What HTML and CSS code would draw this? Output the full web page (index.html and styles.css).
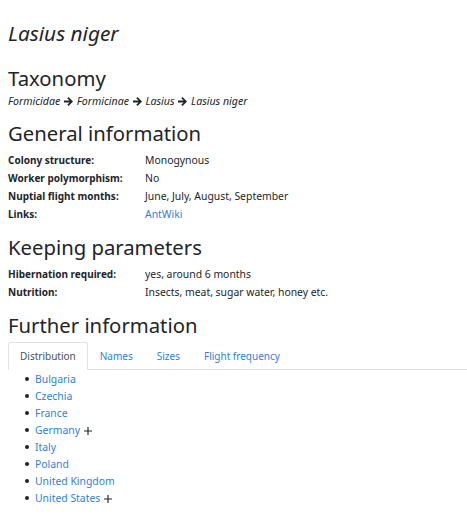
FILE: index.html
```html
<!DOCTYPE html>
<html lang="en">
<head>
  <meta charset="UTF-8">
  <title>Lasius niger</title>
  <link rel="stylesheet" href="styles.css">
</head>
<body>
  <div class="page">
    <h1 class="species">Lasius niger</h1>

    <h2>Taxonomy</h2>
    <p class="taxonomy">
      Formicidae <svg class="arrow" viewBox="0 0 12 10"><path d="M1 4h6.2L4.6 1.4 6 0l5 5-5 5-1.4-1.4L7.2 6H1z"/></svg>
      Formicinae <svg class="arrow" viewBox="0 0 12 10"><path d="M1 4h6.2L4.6 1.4 6 0l5 5-5 5-1.4-1.4L7.2 6H1z"/></svg>
      Lasius <svg class="arrow" viewBox="0 0 12 10"><path d="M1 4h6.2L4.6 1.4 6 0l5 5-5 5-1.4-1.4L7.2 6H1z"/></svg>
      Lasius niger
    </p>

    <h2>General information</h2>
    <table class="info">
      <tr><th>Colony structure:</th><td>Monogynous</td></tr>
      <tr><th>Worker polymorphism:</th><td>No</td></tr>
      <tr><th>Nuptial flight months:</th><td>June, July, August, September</td></tr>
      <tr><th>Links:</th><td><a href="#">AntWiki</a></td></tr>
    </table>

    <h2>Keeping parameters</h2>
    <table class="info">
      <tr><th>Hibernation required:</th><td>yes, around 6 months</td></tr>
      <tr><th>Nutrition:</th><td>Insects, meat, sugar water, honey etc.</td></tr>
    </table>

    <h2>Further information</h2>
    <ul class="tabs">
      <li class="active">Distribution</li>
      <li><a href="#">Names</a></li>
      <li><a href="#">Sizes</a></li>
      <li><a href="#">Flight frequency</a></li>
    </ul>
    <ul class="countries">
      <li><a href="#">Bulgaria</a></li>
      <li><a href="#">Czechia</a></li>
      <li><a href="#">France</a></li>
      <li><a href="#">Germany</a> <svg class="plus" viewBox="0 0 9 9"><path d="M4.5 0v9M0 4.5h9"/></svg></li>
      <li><a href="#">Italy</a></li>
      <li><a href="#">Poland</a></li>
      <li><a href="#">United Kingdom</a></li>
      <li><a href="#">United States</a> <svg class="plus" viewBox="0 0 9 9"><path d="M4.5 0v9M0 4.5h9"/></svg></li>
    </ul>
  </div>
</body>
</html>
```

FILE: styles.css
```css
* {
  box-sizing: border-box;
}
body {
  margin: 0;
  background: #fff;
  color: #212529;
  font-family: 'Noto Sans', sans-serif;
  font-size: 10px;
  overflow: hidden;
}
a {
  color: #2f7fd6;
  text-decoration: none;
}
.page {
  padding: 18px 0 0 8px;
}
.species {
  margin: 0 0 16px;
  font-size: 20.8px;
  font-weight: 400;
  font-style: italic;
  line-height: 30px;
}
h2 {
  margin: 0;
  font-size: 20.3px;
  font-weight: 400;
  line-height: 28px;
}
.taxonomy {
  margin: 1px 0 10px;
  font-style: italic;
  font-size: 10.6px;
  line-height: 16px;
}
.arrow {
  width: 11px;
  height: 9px;
  fill: #212529;
  vertical-align: -1px;
}
.info {
  border-collapse: collapse;
  margin: 4px 0 10px;
}
.info th {
  width: 137px;
  padding: 0;
  text-align: left;
  font-weight: 700;
  line-height: 18px;
}
.info td {
  padding: 0;
  font-size: 10.4px;
  line-height: 18px;
}
.tabs {
  display: flex;
  list-style: none;
  margin: 3px 0 0;
  padding: 0;
  border-bottom: 1px solid #dee2e6;
}
.tabs li {
  padding: 6px 11px;
  line-height: 14px;
  margin-bottom: -1px;
  border: 1px solid transparent;
  border-radius: 3px 3px 0 0;
}
.tabs li.active {
  border-color: #dee2e6 #dee2e6 #fff;
  color: #495057;
}
.countries {
  list-style: none;
  margin: 1px 0 0;
  padding-left: 25px;
}
.countries li {
  height: 17px;
  line-height: 17px;
  font-size: 10.4px;
}
.countries li::before {
  content: "";
  display: inline-block;
  width: 4px;
  height: 4px;
  margin: 0 6px 0 -8px;
  border-radius: 50%;
  background: #212529;
  vertical-align: 2px;
}
.plus {
  width: 8px;
  height: 8px;
  margin-left: 1px;
  stroke: #212529;
  stroke-width: 1.3;
  vertical-align: -1px;
}
```
